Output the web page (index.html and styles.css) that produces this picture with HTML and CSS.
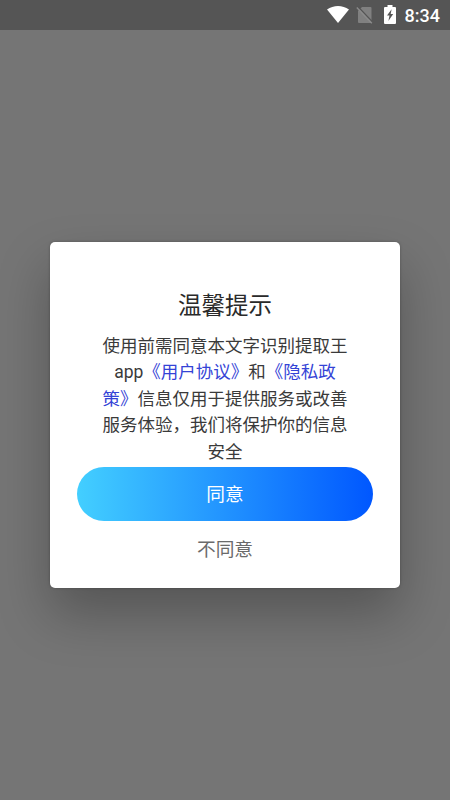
FILE: index.html
```html
<!DOCTYPE html>
<html lang="zh-CN">
<head>
<meta charset="utf-8">
<title>温馨提示</title>
<link rel="stylesheet" href="styles.css">
</head>
<body>
<header class="status">
  <svg class="wifi" width="22" height="17" viewBox="0 0 22 17"><path d="M0 3.6C6.5-1.2 15.500-1.200 22 3.600L11 17Z" fill="#fff"/></svg>
  <svg class="sim" width="17" height="18" viewBox="0 0 17 18"><path d="M6 1h8.500q1 0 1 1v14q0 1-1 1H3q-1 0-1-1V5Z" fill="#808080"/><path d="M2 .800L17 16.500" stroke="#555" stroke-width="1.500"/><path d="M.8 1.500L15.800 17.300" stroke="#8b8b8b" stroke-width="1.400"/></svg>
  <svg class="battery" width="12" height="19" viewBox="0 0 12 19"><path d="M3.500 0h5v2H11q1 0 1 1v15q0 1-1 1H1q-1 0-1-1V3q0-1 1-1h2.500Z" fill="#fff"/><path d="M7.600 4.300L3 10.600h2.500L4.400 16 9.200 9H6.700Z" fill="#555"/></svg>
  <span class="clock">8:34</span>
</header>
<main class="overlay">
  <section class="dialog">
    <h1 class="title">温馨提示</h1>
    <p class="message">使用前需同意本文字识别提取王<br>app<a class="link">《用户协议》</a>和<a class="link">《隐私政<br>策》</a>信息仅用于提供服务或改善<br>服务体验，我们将保护你的信息<br>安全</p>
    <button class="agree">同意</button>
    <button class="decline">不同意</button>
  </section>
</main>
</body>
</html>
```

FILE: styles.css
```css
* {
  box-sizing: border-box;
}

body {
  margin: 0;
  height: 800px;
  overflow: hidden;
  background: #757575;
  font-family: Roboto, "Noto Sans CJK SC", sans-serif;
}

.status {
  display: flex;
  justify-content: flex-end;
  height: 30px;
  padding: 6px 10px 0 0;
  background: #555;
}

.sim {
  margin-left: 7px;
}

.battery {
  margin: -1px 0 0 11px;
}

.clock {
  margin-left: 9px;
  color: #fff;
  font-size: 18px;
  font-weight: 500;
  line-height: 20px;
}

.overlay {
  display: flex;
  justify-content: center;
  padding-top: 212px;
}

.dialog {
  display: flex;
  flex-direction: column;
  align-items: center;
  width: 350px;
  height: 346px;
  padding-top: 47px;
  border-radius: 5px;
  background: #fff;
  box-shadow: 0 26px 52px rgba(0, 0, 0, .27), 0 0 3px rgba(0, 0, 0, .25);
}

.title {
  margin: 0;
  color: #2a2a2a;
  font-size: 23.5px;
  font-weight: 400;
  line-height: 34px;
}

.message {
  margin: 10px 0 0;
  color: #3a3a3a;
  font-size: 17.5px;
  line-height: 26.400px;
  text-align: center;
  white-space: nowrap;
}

.link {
  color: #3443d6;
}

.agree,
.decline {
  flex: none;
  padding: 0;
  border: 0;
  font-family: inherit;
  font-size: 18.700px;
  line-height: 28px;
}

.agree {
  width: 296px;
  height: 54px;
  margin-top: 2px;
  padding-top: 2px;
  border-radius: 27px;
  background: linear-gradient(90deg, #43cfff, #0057ff);
  color: #fff;
}

.decline {
  margin-top: 15px;
  background: none;
  color: #6a6a6a;
}
```
